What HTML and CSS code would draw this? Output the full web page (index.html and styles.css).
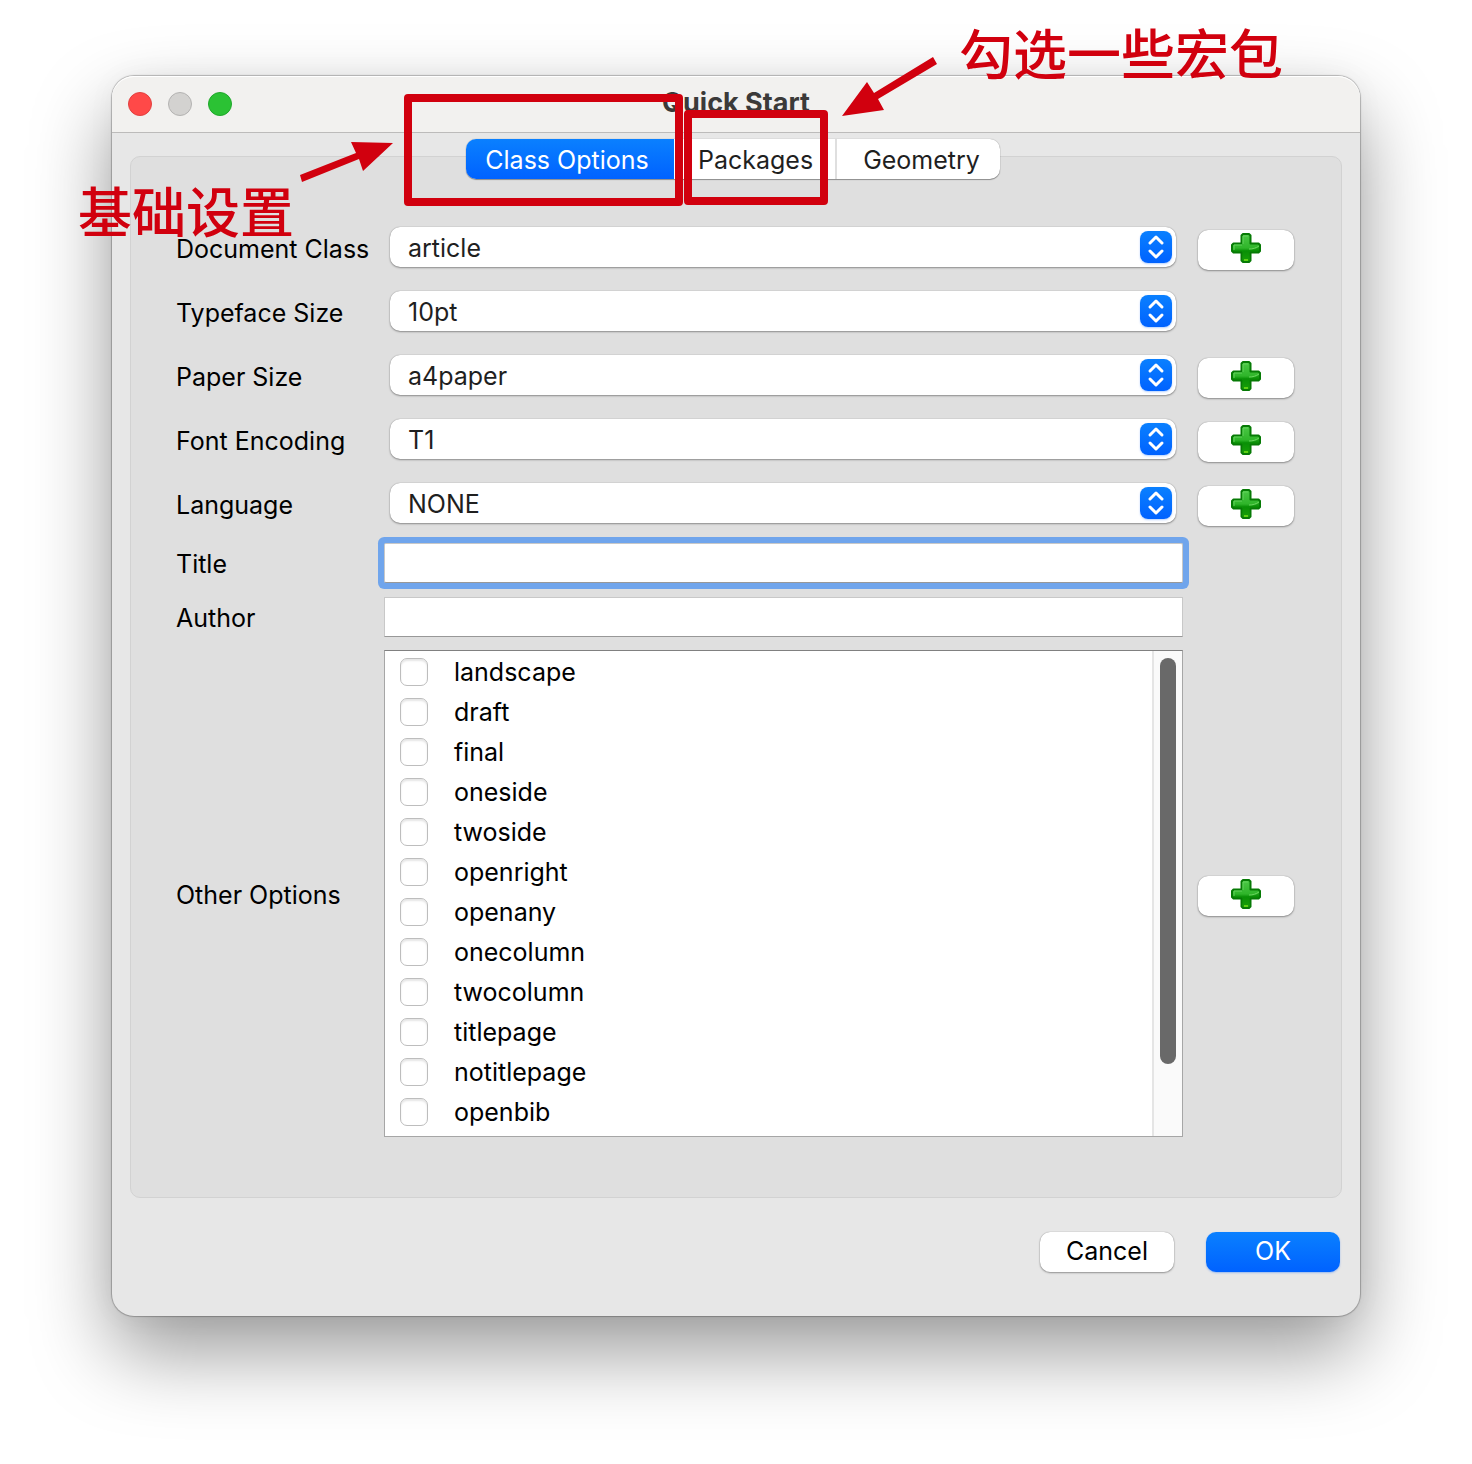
FILE: index.html
```html
<!DOCTYPE html>
<html lang="en">
<head>
    <meta charset="utf-8">
    <title>Quick Start</title>
    <link rel="stylesheet" href="styles.css">
</head>
<body>
    <!-- Shared icons -->
    <svg class="sprite" aria-hidden="true">
        <defs>
            <linearGradient id="plus-fill" x1="0" y1="0" x2="0" y2="1">
                <stop offset="0" stop-color="#4cc846"/>
                <stop offset="0.5" stop-color="#2fb52a"/>
                <stop offset="0.6" stop-color="#0a9207"/>
                <stop offset="1" stop-color="#2cb80e"/>
            </linearGradient>
        </defs>
        <symbol id="icon-plus" viewBox="0 0 30 30">
            <path d="M12 1h6l1.500 1.500v8h8L29 12v6l-1.500 1.500h-8v8L18 29h-6l-1.500-1.500v-8h-8L1 18v-6l1.500-1.500h8v-8z" fill="url(#plus-fill)" stroke="#067a05" stroke-width="2" stroke-linejoin="round"/>
            <path d="M12 18c6 0 12-1 16-4v4h-10v10h-6V18z" fill="#098c06" opacity="0.55"/>
            <path d="M12 11V3h5M3 17v-5h8" fill="none" stroke="#62d35d" stroke-width="1"/>
            <path d="M18 16c4 0 7-1 10-3" fill="none" stroke="#6cd560" stroke-width="1"/>
            <path d="M13 27h4" stroke="#5fd014" stroke-width="2"/>
        </symbol>
        <symbol id="icon-updown" viewBox="0 0 32 32">
            <path d="M10 12l6-6 6 6M10 20l6 6 6-6" fill="none" stroke="#fff" stroke-width="3" stroke-linecap="round" stroke-linejoin="round"/>
        </symbol>
    </svg>

    <main class="dialog">
        <header class="titlebar">
            <div class="lights">
                <button class="light close" aria-label="Close"></button>
                <button class="light minimize" aria-label="Minimize" disabled></button>
                <button class="light zoom" aria-label="Zoom"></button>
            </div>
            <h1>Quick Start</h1>
        </header>

        <div class="tab-row">
            <div class="tabs">
                <button class="tab active">Class Options</button>
                <button class="tab">Packages</button>
                <button class="tab last">Geometry</button>

                <!-- Notes drawn over the dialog -->
                <div class="frame frame-class"></div>
                <div class="frame frame-packages"></div>
                <svg class="arrow arrow-class" viewBox="0 0 94 44" aria-hidden="true">
                    <path d="M0 35L2 42L59 19L63 31L93 3L51 2L56 13z"/>
                </svg>
                <svg class="arrow arrow-packages" viewBox="0 0 96 62" aria-hidden="true">
                    <path d="M91 1L95 8L36 43L42 54L0 60L25 26L32 37z"/>
                </svg>
                <span class="note note-class" lang="zh-CN">基础设置</span>
                <span class="note note-packages" lang="zh-CN">勾选一些宏包</span>
            </div>
        </div>

        <form>
            <div class="panel">
                <div class="row">
                    <label for="document-class">Document Class</label>
                    <div class="select">
                        <select id="document-class"><option>article</option></select>
                        <svg><use href="#icon-updown"/></svg>
                    </div>
                    <button type="button" class="btn add" aria-label="Add document class"><svg><use href="#icon-plus"/></svg></button>
                </div>
                <div class="row">
                    <label for="typeface-size">Typeface Size</label>
                    <div class="select">
                        <select id="typeface-size"><option>10pt</option></select>
                        <svg><use href="#icon-updown"/></svg>
                    </div>
                </div>
                <div class="row">
                    <label for="paper-size">Paper Size</label>
                    <div class="select">
                        <select id="paper-size"><option>a4paper</option></select>
                        <svg><use href="#icon-updown"/></svg>
                    </div>
                    <button type="button" class="btn add" aria-label="Add paper size"><svg><use href="#icon-plus"/></svg></button>
                </div>
                <div class="row">
                    <label for="font-encoding">Font Encoding</label>
                    <div class="select">
                        <select id="font-encoding"><option>T1</option></select>
                        <svg><use href="#icon-updown"/></svg>
                    </div>
                    <button type="button" class="btn add" aria-label="Add font encoding"><svg><use href="#icon-plus"/></svg></button>
                </div>
                <div class="row">
                    <label for="language">Language</label>
                    <div class="select">
                        <select id="language"><option>NONE</option></select>
                        <svg><use href="#icon-updown"/></svg>
                    </div>
                    <button type="button" class="btn add" aria-label="Add language"><svg><use href="#icon-plus"/></svg></button>
                </div>
                <div class="row text-row">
                    <label for="title">Title</label>
                    <input type="text" class="text focused" id="title">
                </div>
                <div class="row text-row">
                    <label for="author">Author</label>
                    <input type="text" class="text" id="author">
                </div>
                <div class="row list-row">
                    <span class="row-label" id="other-label">Other Options</span>
                    <div class="list" role="group" aria-labelledby="other-label">
                        <div class="items">
                            <label class="item"><input type="checkbox">landscape</label>
                            <label class="item"><input type="checkbox">draft</label>
                            <label class="item"><input type="checkbox">final</label>
                            <label class="item"><input type="checkbox">oneside</label>
                            <label class="item"><input type="checkbox">twoside</label>
                            <label class="item"><input type="checkbox">openright</label>
                            <label class="item"><input type="checkbox">openany</label>
                            <label class="item"><input type="checkbox">onecolumn</label>
                            <label class="item"><input type="checkbox">twocolumn</label>
                            <label class="item"><input type="checkbox">titlepage</label>
                            <label class="item"><input type="checkbox">notitlepage</label>
                            <label class="item"><input type="checkbox">openbib</label>
                        </div>
                        <div class="scrollbar"><div class="thumb"></div></div>
                    </div>
                    <button type="button" class="btn add" aria-label="Add option"><svg><use href="#icon-plus"/></svg></button>
                </div>
            </div>

            <footer class="actions">
                <button type="button" class="btn">Cancel</button>
                <button type="submit" class="btn primary">OK</button>
            </footer>
        </form>
    </main>
</body>
</html>
```

FILE: styles.css
```css
* { box-sizing: border-box; }
body { margin: 0; padding: 76px 112px 148px; background: #fff; color: #000; font-family: Inter, "Noto Sans CJK SC", sans-serif; font-size: 25px; line-height: 32px; }
button, input, select { font: inherit; color: inherit; margin: 0; padding: 0; }
.sprite { position: absolute; width: 0; height: 0; }

.dialog { background: #e7e7e7; border-radius: 22px; box-shadow: 0 0 1px 1px rgba(0,0,0,.25), 0 36px 80px rgba(0,0,0,.4), 0 0 30px rgba(0,0,0,.04); }

/* Title bar */
.titlebar { display: grid; grid-template-columns: 1fr auto 1fr; align-items: center; height: 57px; padding: 0 16px 2px; background: #f2f1ef; border-bottom: 1px solid #bcbbba; border-radius: 22px 22px 0 0; box-shadow: inset 0 1px #fff; }
.titlebar h1 { margin: 0; color: #3b3a39; font-size: 27px; font-weight: 700; }
.lights { display: flex; gap: 16px; padding-top: 2px; }
.light { width: 24px; height: 24px; border: 1px solid; border-radius: 50%; }
.close { background: #ff4948; border-color: #e2403f; }
.minimize { background: #d3d2d0; border-color: #b4b3b2; }
.zoom { background: #2bc234; border-color: #1fa82a; }

/* Tabs */
.tab-row { display: flex; justify-content: center; margin-bottom: -23px; padding: 6px 6px 0 0; }
.tabs { position: relative; z-index: 1; display: flex; height: 40px; background: #fff; border-radius: 10px; box-shadow: 0 0 1px rgba(0,0,0,.4), 0 1px 1px rgba(0,0,0,.35); }
.tab { width: 161px; padding: 2px 0 0 2px; background: none; color: #1f1f1f; border: 0; }
.tab.active { width: 208px; padding-right: 8px; background: linear-gradient(#0a80ff, #0062ff); color: #fff; border-radius: 10px 0 0 10px; }
.tab.last { width: 165px; padding-left: 6px; border-left: 2px solid #dfdfdf; }

/* Form */
.panel { margin: 0 18px; padding: 59px 47px 54px 45px; background: #dfdfdf; border: 1px solid #d2d2d2; border-radius: 10px; }
.row { display: grid; grid-template-columns: 208px 1fr 96px; column-gap: 15px; align-items: center; height: 64px; }
.row > label, .row-label { margin-top: 2px; white-space: nowrap; }
.row > :nth-child(2) { margin-left: -15px; }
.text-row { height: 54px; }
.list-row { height: auto; padding: 6px 0; }

.row > .select { position: relative; height: 40px; margin: 0 7px 2px -9px; }
.select select { width: 100%; height: 40px; padding: 2px 40px 0 18px; appearance: none; background: #fff; color: #1f1f1f; border: 0; border-radius: 10px; box-shadow: 0 0 1px rgba(0,0,0,.4), 0 1px 2px rgba(0,0,0,.35); }
.select svg { position: absolute; top: 4px; right: 4px; width: 32px; height: 32px; background: linear-gradient(#0a80ff, #0062ff); border-radius: 8px; box-shadow: 0 1px 2px rgba(0,98,255,.3); pointer-events: none; }

.btn { height: 40px; background: #fff; border: 0; border-radius: 10px; box-shadow: 0 0 1px rgba(0,0,0,.4), 0 1px 2px rgba(0,0,0,.35); }
.primary { background: linear-gradient(#0a80ff, #0062ff); color: #fff; box-shadow: 0 1px 2px rgba(0,98,255,.35); }
.add { display: flex; justify-content: center; margin-top: 4px; padding-top: 3px; }
.add svg { width: 30px; height: 30px; }

.text { height: 40px; padding: 0 8px; background: #fff; border: 1px solid #c8c8c8; border-bottom-color: #989898; outline: 0; }
.focused { box-shadow: 0 0 0 6px #70a5ec; border-radius: 2px; }

/* Options list */
.list { display: flex; background: #fff; border: 1px solid #a6a6a6; border-top-color: #808080; }
.items { flex: 1; padding: 1px 15px 4px; }
.item { display: flex; align-items: center; gap: 26px; height: 40px; }
.item input { appearance: none; width: 28px; height: 28px; background: #fff; border: 1px solid #bdbdbd; border-radius: 7px; box-shadow: inset 0 2px 2px rgba(0,0,0,.1); }
.scrollbar { width: 30px; padding: 7px 6px 0; background: #fafafa; border-left: 2px solid #e5e5e5; }
.thumb { width: 16px; height: 85%; background: #696969; border-radius: 8px; }

.actions { display: flex; justify-content: flex-end; gap: 32px; padding: 34px 20px 44px; }
.actions .btn { width: 134px; padding-bottom: 2px; }

/* Notes */
.frame { position: absolute; border: 8px solid #d1000e; border-radius: 4px; pointer-events: none; }
.frame-class { left: -62px; top: -45px; width: 279px; height: 112px; }
.frame-packages { left: 218px; top: -29px; width: 144px; height: 95px; }
.arrow { position: absolute; fill: #d1000e; pointer-events: none; }
.arrow-class { left: -166px; top: 1px; width: 94px; height: 44px; }
.arrow-packages { left: 376px; top: -83px; width: 96px; height: 62px; }
.note { position: absolute; color: #d1000e; font-family: "Noto Sans CJK SC", sans-serif; font-size: 54px; font-weight: 500; line-height: 64px; white-space: nowrap; }
.note-class { left: -388px; top: 39px; }
.note-packages { left: 493px; top: -119px; }
```
